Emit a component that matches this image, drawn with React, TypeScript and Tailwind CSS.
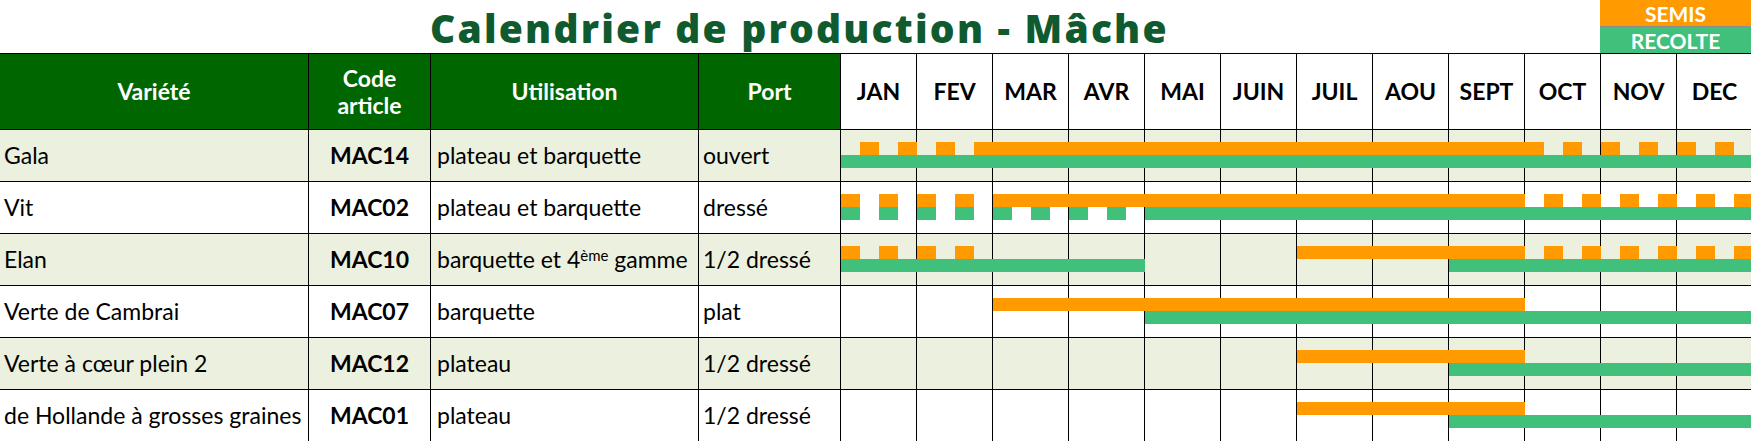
import React from "react";

const MONTHS = ["JAN", "FEV", "MAR", "AVR", "MAI", "JUIN", "JUIL", "AOU", "SEPT", "OCT", "NOV", "DEC"];

const rep = (s: string, n: number) => s.repeat(n);

type Row = {
  v: string;
  code: string;
  util: React.ReactNode;
  port: string;
  shade: boolean;
  o: string;
  g: string;
};

const ROWS: Row[] = [
  {
    v: "Gala",
    code: "MAC14",
    util: "plateau et barquette",
    port: "ouvert",
    shade: true,
    o: rep("0101", 2) + rep("1111", 7) + rep("1010", 3),
    g: rep("1111", 12),
  },
  {
    v: "Vit",
    code: "MAC02",
    util: "plateau et barquette",
    port: "dressé",
    shade: false,
    o: rep("1010", 2) + rep("1111", 7) + rep("0101", 3),
    g: rep("1010", 4) + rep("1111", 8),
  },
  {
    v: "Elan",
    code: "MAC10",
    util: (
      <>
        barquette et 4<sup className="text-[15px]">ème</sup> gamme
      </>
    ),
    port: "1/2 dressé",
    shade: true,
    o: rep("1010", 2) + rep("0000", 4) + rep("1111", 3) + rep("0101", 3),
    g: rep("1111", 4) + rep("0000", 4) + rep("1111", 4),
  },
  {
    v: "Verte de Cambrai",
    code: "MAC07",
    util: "barquette",
    port: "plat",
    shade: false,
    o: rep("0000", 2) + rep("1111", 7) + rep("0000", 3),
    g: rep("0000", 4) + rep("1111", 8),
  },
  {
    v: "Verte à cœur plein 2",
    code: "MAC12",
    util: "plateau",
    port: "1/2 dressé",
    shade: true,
    o: rep("0000", 6) + rep("1111", 3) + rep("0000", 3),
    g: rep("0000", 8) + rep("1111", 4),
  },
  {
    v: "de Hollande à grosses graines",
    code: "MAC01",
    util: "plateau",
    port: "1/2 dressé",
    shade: false,
    o: rep("0000", 6) + rep("1111", 3) + rep("0000", 3),
    g: rep("0000", 8) + rep("1111", 4),
  },
];

function runs(s: string): [number, number][] {
  const out: [number, number][] = [];
  let i = 0;
  while (i < s.length) {
    if (s[i] === "1") {
      let j = i;
      while (j < s.length && s[j] === "1") j++;
      out.push([i, j - i]);
      i = j;
    } else i++;
  }
  return out;
}

function Lane({ pattern, color }: { pattern: string; color: string }) {
  return (
    <div className="grid h-[13px] grid-cols-[repeat(48,19px)] grid-rows-[13px]">
      {runs(pattern).map(([start, len]) => (
        <div
          key={start}
          className={color}
          style={{ gridColumn: `${start + 1} / span ${len}`, gridRow: "1" }}
        />
      ))}
    </div>
  );
}

export default function App() {
  return (
    <div className="w-[1751px] h-[441px] overflow-hidden bg-white font-['Lato',sans-serif] text-black">
      {/* Title band */}
      <div className="flex h-[53px]">
        <div className="w-[1600px] pl-[430px] flex items-center">
          <h1 className="font-['Open_Sans',sans-serif] font-extrabold text-[39px] leading-[53px] tracking-[2.2px] text-[#0F5A2E] whitespace-nowrap pt-[2px]">
            Calendrier de production - Mâche
          </h1>
        </div>
        <div className="w-[151px] flex flex-col">
          <div className="h-[26px] bg-[#FF9A00] text-white font-bold text-[21px] leading-none flex items-center justify-center">
            SEMIS
          </div>
          <div className="h-[27px] bg-[#40C07A] border-t border-[#8d8d8d] text-white font-bold text-[21px] leading-none flex items-center justify-center">
            RECOLTE
          </div>
        </div>
      </div>

      {/* Header row */}
      <div className="flex h-[77px] border-y border-black w-[1753px]">
        <div className="w-[309px] shrink-0 bg-[#006600] border-r border-black text-white font-bold text-[23px] flex items-center justify-center">
          Variété
        </div>
        <div className="w-[122px] shrink-0 bg-[#006600] border-r border-black text-white font-bold text-[23px] leading-[27px] flex flex-col items-center justify-center text-center">
          <span>Code</span>
          <span>article</span>
        </div>
        <div className="w-[268px] shrink-0 bg-[#006600] border-r border-black text-white font-bold text-[23px] flex items-center justify-center">
          Utilisation
        </div>
        <div className="w-[142px] shrink-0 bg-[#006600] border-r border-black text-white font-bold text-[23px] flex items-center justify-center">
          Port
        </div>
        {MONTHS.map((m) => (
          <div
            key={m}
            className="w-[76px] shrink-0 border-r border-black font-bold text-[23px] flex items-center justify-center"
          >
            {m}
          </div>
        ))}
      </div>

      {/* Data rows */}
      {ROWS.map((r) => (
        <div
          key={r.code}
          className={`flex h-[52px] border-b border-black w-[1753px] ${r.shade ? "bg-[#EBF1DE]" : "bg-white"}`}
        >
          <div className="w-[309px] shrink-0 border-r border-black text-[23px] flex items-center pl-[4px] whitespace-nowrap">
            {r.v}
          </div>
          <div className="w-[122px] shrink-0 border-r border-black text-[23px] font-bold flex items-center justify-center">
            {r.code}
          </div>
          <div className="w-[268px] shrink-0 border-r border-black text-[23px] flex items-center pl-[6px] whitespace-nowrap">
            <span>{r.util}</span>
          </div>
          <div className="w-[142px] shrink-0 border-r border-black text-[23px] flex items-center pl-[4px] whitespace-nowrap">
            {r.port}
          </div>
          <div className="relative w-[912px] shrink-0 flex">
            {MONTHS.map((m) => (
              <div key={m} className="w-[76px] h-full shrink-0 border-r border-black" />
            ))}
            <div className="absolute left-0 top-[12px] w-[912px] flex flex-col">
              <Lane pattern={r.o} color="bg-[#FF9A00]" />
              <Lane pattern={r.g} color="bg-[#40C07A]" />
            </div>
          </div>
        </div>
      ))}
    </div>
  );
}
